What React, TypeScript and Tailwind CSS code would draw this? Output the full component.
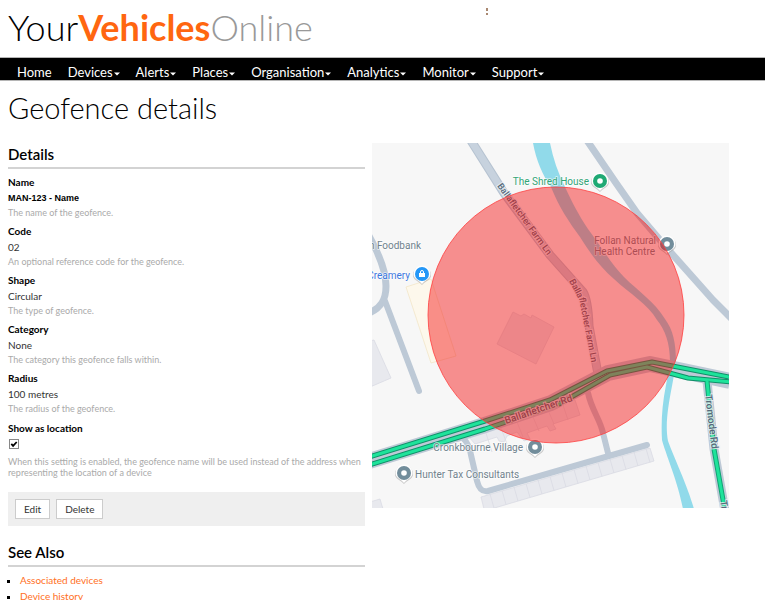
import type { ReactNode } from "react";

const menus = [
  "Devices",
  "Alerts",
  "Places",
  "Organisation",
  "Analytics",
  "Monitor",
  "Support",
];

const fields = [
  { id: "name", label: "Name", value: "MAN-123 - Name", help: "The name of the geofence." },
  { id: "code", label: "Code", value: "02", help: "An optional reference code for the geofence." },
  { id: "shape", label: "Shape", value: "Circular", help: "The type of geofence." },
  { id: "category", label: "Category", value: "None", help: "The category this geofence falls within." },
  { id: "radius", label: "Radius", value: "100 metres", help: "The radius of the geofence." },
];

const terraceDividers = [0, 1, 2, 3, 4, 5, 6, 7, 8, 9, 10, 11, 12, 13];

function SectionHeading({ children }: { children: ReactNode }) {
  return (
    <h2 className="border-b-2 border-[#d3d3d3] pb-[3px] text-[15px] leading-5 font-semibold text-black">
      {children}
    </h2>
  );
}

function Header() {
  return (
    <header className="flex h-[57px] items-start pl-2">
      <a href="#" className="pt-1 text-[36px] leading-[46px] font-light text-black">
        Your<span className="font-bold text-[#ff6610]">Vehicles</span>
        <span className="text-[#999999]">Online</span>
      </a>
      <span className="ml-auto flex flex-col gap-[2px] pt-[8px] pr-[277px]">
        <span className="h-[3px] w-[2px] bg-[#a98871]" />
        <span className="h-[2px] w-[2px] bg-[#a98871]" />
      </span>
    </header>
  );
}

function NavBar() {
  return (
    <nav className="flex h-6 items-end gap-4 border-y border-[#b5b5b5] bg-black pl-[17px] text-[13px] leading-4 text-white">
      <a href="#">Home</a>
      {menus.map((menu) => (
        <button key={menu} type="button" className="flex items-center gap-px">
          {menu}
          <svg viewBox="0 0 6 4" className="mt-[3px] h-1 w-[6px] fill-white" aria-hidden="true">
            <path d="M0 0.500h6L3 3.500z" />
          </svg>
        </button>
      ))}
    </nav>
  );
}

function Pin({ x, y, color, children }: { x: number; y: number; color: string; children?: ReactNode }) {
  return (
    <g transform={`translate(${x} ${y})`}>
      <path d="M-9 1a9 9 0 1 1 18 0c0 5-5 5.500-9 10c-4-4.500-9-5-9-10z" fill="#999" opacity="0.5" />
      <path d="M-8.500 0a8.500 8.500 0 1 1 17 0c0 5-5 5.500-8.500 10c-3.500-4.500-8.500-5-8.500-10z" fill="#fff" />
      <circle r="7" fill={color} />
      {children ?? <circle r="2.800" fill="#fff" />}
    </g>
  );
}

function GeofenceMap() {
  return (
    <svg
      viewBox="372 143 357 365"
      preserveAspectRatio="xMidYMid slice"
      className="h-[365px] w-full bg-[#f7f7f7] font-['Roboto',sans-serif] text-[10px]"
      role="img"
      aria-label="Geofence map"
    >
      {/* buildings */}
      <g fill="#e8e9ee" stroke="#d9dbe3" strokeWidth="0.8">
        <path d="M370 341l4-1 17 38-21 9z" />
        <path d="M370 502l10-3 3 10h-13z" />
        <path d="M513 312l8 4 3-2 7 4 1-3 22 12-18 37-39-20z" />
        <path d="M469 437l106-37 5 15-27 9 3 5-6 2-3-5-20 7 3 6-6 2-7-9-10 4-3 6-5-1-2-4-22 7z" />
        <path d="M481 497l169-49 4 13-163 48h-7z" />
        <path d="M486 433l6 19M501 428l6 16M517 422l6 15M533 417l6 14M548 410l6 14M563 405l5 15" />
        {terraceDividers.map((i) => (
          <path key={i} d={`M${490 + i * 12} ${494 - i * 3.5}l4 14`} />
        ))}
      </g>
      <path d="M406 287l25-8 25 77-25 7z" fill="#fdf8ec" stroke="#f3e6c8" strokeWidth="0.8" />

      {/* minor roads */}
      <g fill="none" stroke="#bdc9d6" strokeLinecap="round" strokeLinejoin="round">
        <path d="M586 139l30 44 21 30 23 27 13 15 40 45 19 19" strokeWidth="7" />
        <path d="M369 236c10 18 17 34 17 50c0 14-5 22-17 27" strokeWidth="7" />
        <path d="M385 301l34 90" strokeWidth="6" />
        <path d="M463 438c4 4 7 10 8 17l6 26c2 8 5 11 11 10l62-18 97-28" strokeWidth="6" />
        <path d="M588 393c4 18 12 26 15 40l5 20" strokeWidth="6" />
        <path d="M707 381l7 68 11 62" strokeWidth="9" />
      </g>
      <path d="M470 139l34 54 46 62 33 37q5 8 6 34l9 48" fill="none" stroke="#b6c3d1" strokeWidth="9" strokeLinejoin="round" />
      <path d="M470 139l34 54 46 62 33 37q5 8 6 34l9 48" fill="none" stroke="#c7d2de" strokeWidth="7" strokeLinejoin="round" />

      {/* river */}
      <path
        d="M533 143c3 17 10 33 18 44c8 20 18 35 29 50c10 16 20 30 34 42c16 15 34 25 43 41c8 10 13 22 13 43l-4 22c-4 20-5 38-4 55c3 12 16 42 21 69h11c-6-22-21-54-26-68c-3-16 0-34 4-55l4-22c0-22-3-34-11-45c-10-17-27-28-41-42c-12-12-24-32-36-48c-10-15-16-27-23-42c-7-14-12-29-15-44z"
        fill="#91daea"
      />

      {/* main road with live traffic */}
      <g fill="none" strokeLinejoin="round">
        <path d="M366 462l119-37 66-22 57-30 42-9 80 17" stroke="#bdc9d6" strokeWidth="16" />
        <path d="M366 458l119-37 65-21 57-29 45-9 77 15" stroke="#108f68" strokeWidth="5" />
        <path d="M366 466l119-37 74-25 51-29 37-8 41 11 45 4" stroke="#108f68" strokeWidth="5" />
        <path d="M366 458l119-37 65-21 57-29 45-9 77 15" stroke="#1ee39b" strokeWidth="3" />
        <path d="M366 466l119-37 74-25 51-29 37-8 41 11 45 4" stroke="#1ee39b" strokeWidth="3" />
        <path d="M707 381l7 68 11 62" stroke="#12a374" strokeWidth="5" />
        <path d="M707 381l7 68 11 62" stroke="#1ee39b" strokeWidth="3" />
      </g>

      {/* road names */}
      <g
        fill="#56697a"
        stroke="#eef2f6"
        strokeOpacity="0.8"
        strokeWidth="2"
        paintOrder="stroke"
        fontSize="9"
        fontWeight="500"
      >
        <text transform="translate(497 186) rotate(54)">Ballafletcher Farm Ln</text>
        <g>
          <text transform="translate(569 281) rotate(62)">Balla</text>
          <text transform="translate(579 298) rotate(79)">fletcher Farm Ln</text>
        </g>
        <text transform="translate(506 424) rotate(-19)" fontSize="10">Ballafletcher Rd</text>
        <text transform="translate(705 395) rotate(83)" fontSize="10">Tromode Rd</text>
        <text transform="translate(720 501) rotate(81)" fontSize="10">Tr</text>
      </g>

      {/* places */}
      <g stroke="#fff" strokeOpacity="0.7" strokeWidth="1.500" strokeLinejoin="round" paintOrder="stroke" fill="#70828c">
        <text x="589" y="185" textAnchor="end" fill="#33a576">The Shred House</text>
        <text x="656" y="244" textAnchor="end">Follan Natural</text>
        <text x="655" y="255" textAnchor="end">Health Centre</text>
        <text x="421" y="249" textAnchor="end">h Foodbank</text>
        <text x="410" y="279" textAnchor="end" fill="#3c78e0">Creamery</text>
        <text x="523" y="451" textAnchor="end">Cronkbourne Village</text>
        <text x="415" y="478">Hunter Tax Consultants</text>
      </g>
      <Pin x={600} y={181} color="#1fa974" />
      <Pin x={667} y={244} color="#728d9b" />
      <Pin x={535} y={447} color="#728d9b" />
      <Pin x={404} y={473} color="#728d9b" />
      <Pin x={422} y={274} color="#2497f7">
        <path d="M-3-1h6v4h-6z" fill="#fff" />
        <path d="M-1.500-1v-1a1.500 1.500 0 0 1 3 0v1" fill="none" stroke="#fff" />
      </Pin>

      <circle cx="556" cy="315" r="128" fill="#f30e0e" fillOpacity="0.45" stroke="#ff4040" strokeOpacity="0.8" />
    </svg>
  );
}

function Details() {
  return (
    <section>
      <SectionHeading>Details</SectionHeading>
      <dl className="flex flex-col gap-[3px] pt-[5px]">
        {fields.map((field) => (
          <div key={field.id}>
            <dt className="text-[10px] leading-4 font-bold text-black">{field.label}</dt>
            <dd
              className={
                field.id === "name"
                  ? "font-['Liberation_Sans',sans-serif] text-[9px] leading-4 font-bold text-black"
                  : "text-[10px] leading-4 text-[#333]"
              }
            >
              {field.value}
            </dd>
            <dd className="text-[9px] leading-[14px] text-[#aaa]">{field.help}</dd>
          </div>
        ))}
      </dl>
      <div className="flex flex-col items-start pt-1">
        <label htmlFor="show-as-location" className="text-[10px] leading-4 font-bold text-black">
          Show as location
        </label>
        <span className="mt-[3px] grid">
          <input
            id="show-as-location"
            type="checkbox"
            defaultChecked
            className="peer col-start-1 row-start-1 ml-px size-[10px] appearance-none border border-[#888] bg-white"
          />
          <svg viewBox="0 0 10 10" className="pointer-events-none col-start-1 row-start-1 ml-px hidden size-[10px] peer-checked:block">
            <path d="M2.300 4.800l1.800 2 3.600-3.800" fill="none" stroke="#000" strokeWidth="1.800" />
          </svg>
        </span>
        <p className="pt-[7px] text-[9px] leading-[11px] text-[#aaa]">
          When this setting is enabled, the geofence name will be used instead of the address when
          representing the location of a device
        </p>
      </div>
    </section>
  );
}

export default function App() {
  const buttonClass = "h-5 border border-[#ccc] bg-white px-2 text-[10px] leading-4 text-[#333]";

  return (
    <div className="min-h-screen bg-white font-['Lato',sans-serif]">
      <Header />
      <NavBar />
      <main className="pr-9 pl-2">
        <h1 className="pt-[9px] text-[29px] leading-9 font-light text-black">Geofence details</h1>
        <div className="grid grid-cols-2 gap-[7px] pt-[17px]">
          <div className="pt-px">
            <Details />
            <div className="mt-[14px] flex gap-[6px] bg-[#efefef] p-[7px]">
              <button type="button" className={buttonClass}>Edit</button>
              <button type="button" className={buttonClass}>Delete</button>
            </div>
            <section className="pt-4">
              <SectionHeading>See Also</SectionHeading>
              <ul className="list-[square] pt-[5px] pl-3 text-[10px] leading-4">
                <li><a href="#" className="text-[#ff6f24]">Associated devices</a></li>
                <li><a href="#" className="text-[#ff6f24]">Device history</a></li>
              </ul>
            </section>
          </div>
          <GeofenceMap />
        </div>
      </main>
    </div>
  );
}
